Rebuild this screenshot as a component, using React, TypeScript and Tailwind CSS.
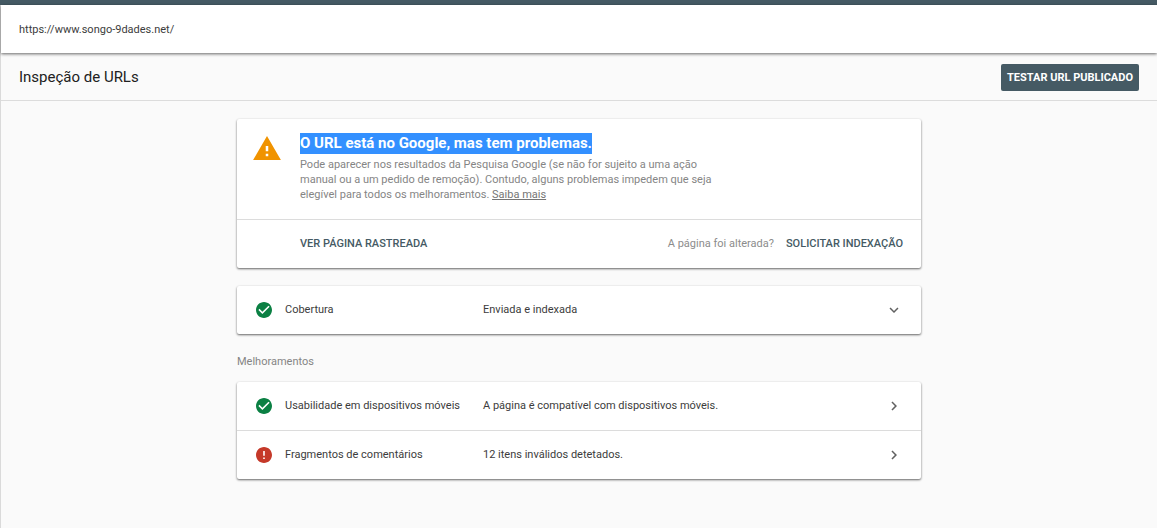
import type { ReactNode } from "react";

const CARD = "rounded-xs bg-white shadow-[0_1px_2px_rgba(0,0,0,0.45),0_1px_3px_rgba(0,0,0,0.2)]";

type IconProps = { className?: string };

function WarningIcon({ className }: IconProps) {
  return (
    <svg viewBox="1 2 22 19" className={className} fill="currentColor" aria-hidden="true">
      <path d="M1 21h22L12 2 1 21zm12-3h-2v-2h2v2zm0-4h-2v-4h2v4z" />
    </svg>
  );
}

function CheckIcon() {
  return (
    <svg viewBox="2 2 20 20" className="size-4 text-[#0b8043]" fill="currentColor" aria-hidden="true">
      <path d="M12 2C6.48 2 2 6.48 2 12s4.48 10 10 10 10-4.48 10-10S17.52 2 12 2zm-2 15l-5-5 1.41-1.41L10 14.17l7.59-7.59L19 8l-9 9z" />
    </svg>
  );
}

function ErrorIcon() {
  return (
    <svg viewBox="2 2 20 20" className="size-4 text-[#c53929]" fill="currentColor" aria-hidden="true">
      <path d="M12 2C6.48 2 2 6.48 2 12s4.48 10 10 10 10-4.48 10-10S17.52 2 12 2zm1 15h-2v-2h2v2zm0-4h-2V7h2v6z" />
    </svg>
  );
}

function Chevron({ down }: { down?: boolean }) {
  return (
    <svg viewBox="0 0 24 24" className="size-[18px] text-[#616161]" fill="currentColor" aria-hidden="true">
      {down ? (
        <path d="M7.41 8.59L12 13.17l4.59-4.58L18 10l-6 6-6-6 1.41-1.41z" />
      ) : (
        <path d="M8.59 16.59L13.17 12 8.59 7.41 10 6l6 6-6 6-1.41-1.41z" />
      )}
    </svg>
  );
}

function Row({ icon, label, value, down }: { icon: ReactNode; label: string; value: string; down?: boolean }) {
  return (
    <button
      type="button"
      aria-expanded={down ? false : undefined}
      className="flex w-full items-center py-[15px] pr-[18px] pl-[19px] text-left leading-4 text-[#3c3c3c]"
    >
      {icon}
      <span className="ml-[13px] w-[198px] shrink-0">{label}</span>
      <span className="grow">{value}</span>
      <Chevron down={down} />
    </button>
  );
}

export default function App() {
  return (
    <div className="min-h-screen border-t-5 border-[#455a64] bg-[#fafafa] font-['Roboto',sans-serif] text-[11px] leading-[15px] text-[#3c3c3c]">
      <div className="min-h-[calc(100vh-5px)] border-l border-[#dadada]">
        <header className="relative flex h-12 items-center bg-white px-[18px] shadow-[0_1px_3px_rgba(0,0,0,0.6)]">
          https://www.songo-9dades.net/
        </header>

        <div className="flex h-12 items-center justify-between border-b border-[#dcdcdc] px-[18px] pt-0.5">
          <h1 className="text-[15px] leading-[21px] text-[#212121]">Inspeção de URLs</h1>
          <button type="button" className="h-[27px] rounded-xs bg-[#455a64] px-1.5 font-bold text-white">
            TESTAR URL PUBLICADO
          </button>
        </div>

        <main className="mx-auto max-w-[684px] py-[18px]">
          <section className={CARD}>
            <div className="flex h-[100px] items-start gap-[19px] px-4 pt-3.5">
              <WarningIcon className="mt-[3px] h-6 w-7 shrink-0 text-[#f09300]" />
              <div>
                <h2 className="mb-[3px] text-[15px] leading-[21px] font-bold text-white">
                  <span className="inline-block bg-[#3390ff]">O URL está no Google, mas tem problemas.</span>
                </h2>
                <p className="max-w-[430px] text-[#858585]">
                  Pode aparecer nos resultados da Pesquisa Google (se não for sujeito a uma ação manual ou a um pedido
                  de remoção). Contudo, alguns problemas impedem que seja elegível para todos os melhoramentos.{" "}
                  <a href="#saiba-mais" className="text-[#757575] underline">
                    Saiba mais
                  </a>
                </p>
              </div>
            </div>
            <div className="flex items-center border-t border-[#dcdcdc] py-4 pr-[18px] pl-[63px] leading-4">
              <button type="button" className="font-medium text-[#455a64]">
                VER PÁGINA RASTREADA
              </button>
              <span className="ml-auto text-[#8c8c8c]">A página foi alterada?</span>
              <button type="button" className="ml-3 font-medium text-[#455a64]">
                SOLICITAR INDEXAÇÃO
              </button>
            </div>
          </section>

          <section className={`mt-[18px] ${CARD}`}>
            <Row icon={<CheckIcon />} label="Cobertura" value="Enviada e indexada" down />
          </section>

          <h3 className="mt-5 mb-[13px] text-[#858585]">Melhoramentos</h3>

          <section className={CARD}>
            <Row icon={<CheckIcon />} label="Usabilidade em dispositivos móveis" value="A página é compatível com dispositivos móveis." />
            <div className="border-t border-[#dcdcdc]">
              <Row icon={<ErrorIcon />} label="Fragmentos de comentários" value="12 itens inválidos detetados." />
            </div>
          </section>
        </main>
      </div>
    </div>
  );
}
